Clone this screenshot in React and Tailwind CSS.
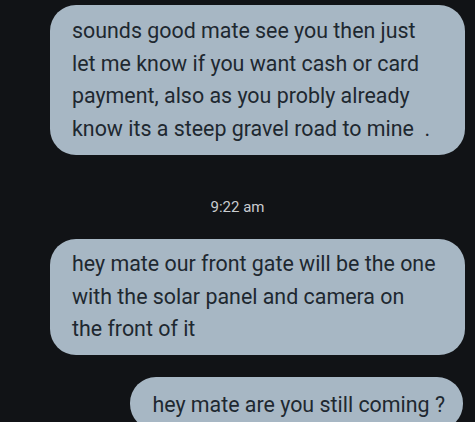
export default function App() {
  const bubble =
    'bg-[#a7b7c4] text-[#1e2830] rounded-[26px] pl-[22px] pr-[18px] py-[8px] text-[21.4px] leading-[32.7px]'

  return (
    <div
      className="w-[475px] h-[422px] overflow-hidden bg-[#111316] flex flex-col items-end pr-[10px] pt-[5px]"
      style={{ fontFamily: 'Roboto, "Noto Sans", sans-serif' }}
    >
      <div className={`${bubble} w-[415px] pt-[10px] pb-[9px]`}>
        sounds good mate see you then just
        <br />
        let me know if you want cash or card
        <br />
        payment, also as you probly already
        <br />
        know its a steep gravel road to mine&nbsp; .
      </div>

      <div className="self-stretch pl-[10px] pt-[42px] pb-[22px] text-center text-[15px] leading-[20px] text-[#c9ccd0]">
        9:22 am
      </div>

      <div className={`${bubble} w-[415px] pt-[9px] pb-[9px]`}>
        hey mate our front gate will be the one
        <br />
        with the solar panel and camera on
        <br />
        the front of it
      </div>

      <div className={`${bubble} mt-[22px] pl-[20px] pr-[18px] pt-[12px] mr-[2px]`}>
        hey mate are you still coming ?
      </div>
    </div>
  )
}
